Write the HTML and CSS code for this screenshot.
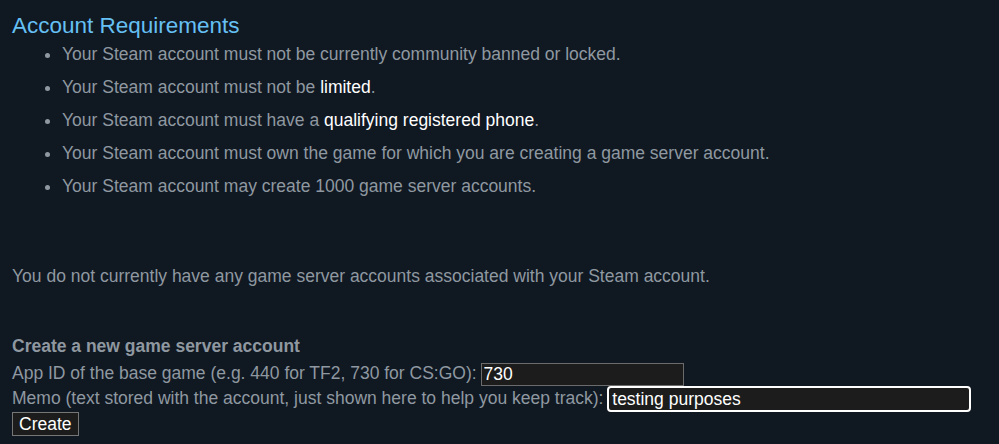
FILE: index.html
```html
<!DOCTYPE html>
<html>
<head>
<meta charset="utf-8">
<link rel="stylesheet" href="styles.css">
</head>
<body>
<div class="page">
  <h2 class="title">Account Requirements</h2>
  <ul class="reqs">
    <li>Your Steam account must not be currently community banned or locked.</li>
    <li>Your Steam account must not be <a class="hl" href="#">limited</a>.</li>
    <li>Your Steam account must have a <a class="hl" href="#">qualifying registered phone</a>.</li>
    <li>Your Steam account must own the game for which you are creating a game server account.</li>
    <li>Your Steam account may create 1000 game server accounts.</li>
  </ul>
  <p class="none">You do not currently have any game server accounts associated with your Steam account.</p>
  <form class="create">
    <div class="create-title">Create a new game server account</div>
    <div class="row row1">App ID of the base game (e.g. 440 for TF2, 730 for CS:GO): <input class="inp appid" type="text" value="730"></div>
    <div class="row row2">Memo (text stored with the account, just shown here to help you keep track): <input class="inp memo" type="text" value="testing purposes"></div>
    <button class="btn" type="button">Create</button>
  </form>
</div>
</body>
</html>
```
FILE: styles.css
```css
html, body {
  margin: 0;
  background: #101822;
}
body {
  font-family: "Liberation Sans", Arial, sans-serif;
  font-size: 17.5px;
  color: #8f98a0;
}
.page {
  padding: 10px 12px 0 12px;
}
.title {
  margin: 0;
  font-size: 22.5px;
  font-weight: normal;
  color: #66c0f4;
  line-height: 32px;
}
.reqs {
  margin: 2px 0 0 0;
  padding-left: 50px;
}
.reqs li {
  line-height: 20px;
  margin-bottom: 13px;
}
.hl {
  color: #ffffff;
  text-decoration: none;
}
.none {
  margin: 70px 0 0 0;
  line-height: 20px;
}
.create {
  margin-top: 46px;
}
.create-title {
  font-weight: bold;
  line-height: 28px;
}
.row1 {
  height: 26px;
  line-height: 26px;
}
.row2 {
  height: 25px;
  line-height: 25px;
}
.inp {
  font-family: "Liberation Sans", Arial, sans-serif;
  font-size: 17.5px;
  color: #ffffff;
  background: #1c1c1c;
  border: 1px solid #6b6b6b;
  padding: 0 2px;
  margin: 0 0 0 -1px;
  outline: none;
  vertical-align: middle;
  box-sizing: border-box;
}
.appid {
  width: 203px;
  height: 23px;
}
.memo {
  width: 364px;
  height: 26px;
  border: 2px solid #ffffff;
  border-radius: 4px;
  padding: 0 3px;
}
.btn {
  font-family: "Liberation Sans", Arial, sans-serif;
  font-size: 17.5px;
  color: #ffffff;
  background: #1c1c1c;
  border: 1px solid #767676;
  padding: 0 6px;
  margin: 1px 0 0 0;
  height: 24px;
  line-height: 21px;
  display: block;
}
```
